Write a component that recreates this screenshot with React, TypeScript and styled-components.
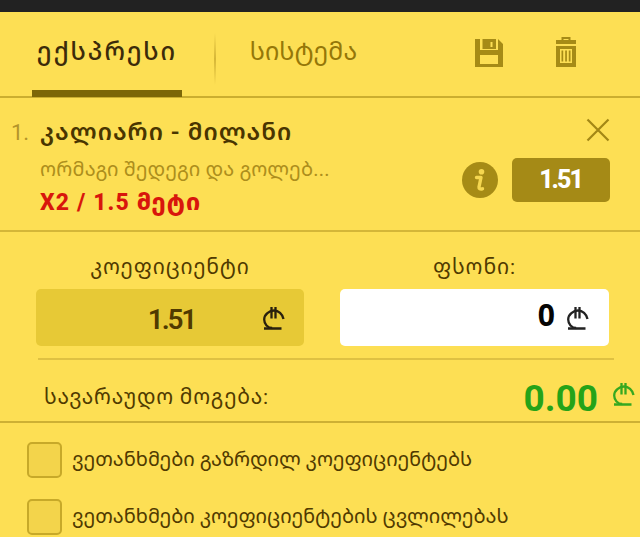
import styled, { createGlobalStyle } from "styled-components";

const GlobalStyle = createGlobalStyle`
  * {
    box-sizing: border-box;
  }

  body {
    margin: 0;
    background: #fddf54;
    overflow: hidden;
  }
`;

const agreements = [
  "ვეთანხმები გაზრდილ კოეფიციენტებს",
  "ვეთანხმები კოეფიციენტების ცვლილებას",
];

const Slip = styled.main`
  display: flex;
  flex-direction: column;
  width: 640px;
  height: 537px;
  overflow: hidden;
  border-top: 12px solid #222;
  background: #fddf54;
  color: #503a00;
  font-family: Roboto, "Noto Sans Georgian", "DejaVu Sans", sans-serif;
`;

const Header = styled.header`
  display: flex;
  height: 86px;
  padding-left: 32px;
  border-bottom: 2px solid #cbae2f;
`;

const Tab = styled.button<{ $active?: boolean; $width: number }>`
  width: ${(p) => p.$width}px;
  height: 85px;
  padding: 1px 0 0;
  border: 0;
  border-bottom: 7px solid ${(p) => (p.$active ? "#7d6707" : "transparent")};
  background: none;
  color: ${(p) => (p.$active ? "#3c2b0a" : "#957708")};
  font: ${(p) => (p.$active ? 500 : 400)} 25px/76px Roboto, "Noto Sans Georgian", "DejaVu Sans", sans-serif;
  letter-spacing: ${(p) => (p.$active ? 2 : 0)}px;
  white-space: nowrap;
`;

const TabDivider = styled.div`
  width: 2px;
  height: 52px;
  margin: 21px 33px 0 32px;
  background: linear-gradient(#fddf54, #d5b637 50%, #fddf54);
`;

const Tools = styled.div`
  display: flex;
  gap: 53px;
  margin: 25px 0 0 117px;
`;

const Match = styled.section`
  display: flex;
  height: 134px;
  padding-left: 11px;
  border-bottom: 2px solid #d4b638;
`;

const Index = styled.span`
  width: 29px;
  padding-top: 20px;
  color: #b3942a;
  font-size: 22px;
  line-height: 30px;
`;

const MatchInfo = styled.div`
  width: 422px;
  padding-top: 19px;
  white-space: nowrap;
`;

const Teams = styled.h2`
  margin: 0;
  color: #493500;
  font-size: 24px;
  font-weight: 600;
  line-height: 30px;
  letter-spacing: 1px;
`;

const Market = styled.p`
  margin: 7px 0 0;
  color: #ad8e1c;
  font-size: 20px;
  line-height: 30px;
  letter-spacing: 0.15px;
`;

const Pick = styled.p`
  margin: 4px 0 0;
  color: #d8160c;
  font-size: 23px;
  font-weight: 800;
  line-height: 30px;
  letter-spacing: 1.1px;
`;

const MatchSide = styled.div`
  display: flex;
  flex-direction: column;
  align-items: flex-end;
  width: 148px;
  padding-top: 20px;
`;

const OddsRow = styled.div`
  display: flex;
  align-items: center;
  justify-content: space-between;
  width: 100%;
  margin-top: 15px;
`;

const OddsBadge = styled.div`
  width: 98px;
  height: 44px;
  margin-top: 1px;
  padding-right: 1px;
  border-radius: 5px;
  background: #a58a16;
  color: #fff;
  font: 800 25px/44px Roboto, sans-serif;
  letter-spacing: -2px;
  text-align: center;
`;

const Fields = styled.section`
  display: flex;
  gap: 36px;
  height: 128px;
  margin: 0 26px 0 38px;
  border-bottom: 2px solid #dfc142;
`;

const Field = styled.label`
  width: 268px;
  margin-left: -2px;
  padding-top: 20px;
  font-size: 21px;
  line-height: 30px;
  text-align: center;
  white-space: nowrap;

  & + & {
    width: 269px;
    margin-left: 0;
  }
`;

const FieldTitle = styled.span`
  letter-spacing: 0.9px;
`;

const FieldBox = styled.div<{ $editable?: boolean }>`
  display: flex;
  align-items: center;
  justify-content: flex-end;
  height: 57px;
  margin-top: 7px;
  padding-right: ${(p) => (p.$editable ? 20 : 19)}px;
  border-radius: 5px;
  background: ${(p) => (p.$editable ? "#fff" : "#e7c936")};
`;

const Coefficient = styled.span`
  margin-right: 68px;
  padding-top: 4px;
  font: 600 28px/32px Roboto, sans-serif;
  letter-spacing: -2.2px;
`;

const Stake = styled.span`
  margin-right: 12px;
  padding-bottom: 5px;
  color: #050505;
  font: 700 30px/32px "Noto Sans", sans-serif;
`;

const Payout = styled.section`
  display: flex;
  align-items: center;
  height: 63px;
  padding: 7px 5px 0 44px;
  border-bottom: 2px solid #cdb034;
`;

const PayoutLabel = styled.span`
  flex: 1;
  padding-top: 3px;
  font-size: 21px;
  letter-spacing: 0.75px;
  white-space: nowrap;
`;

const Amount = styled.strong`
  margin-right: 15px;
  padding-top: 10px;
  color: #25a318;
  font: 700 37px/44px Roboto, sans-serif;
`;

const Agreements = styled.section`
  display: flex;
  flex-direction: column;
  gap: 21px;
  padding: 19px 0 0 27px;
`;

const Agreement = styled.label`
  display: flex;
  align-items: center;
  gap: 10px;
  height: 36px;
  font-size: 20px;
  line-height: 36px;
  letter-spacing: -0.05px;
  white-space: nowrap;
`;

const AgreementText = styled.span`
  padding-bottom: 2px;
`;

const Checkbox = styled.span`
  width: 35px;
  height: 36px;
  border: 2px solid #c7a929;
  border-radius: 5px;
  background: #f3d44b;
`;

const SaveIcon = () => (
  <svg width="28" height="30" viewBox="0 0 28 30" fill="#a68b16">
    <path
      fillRule="evenodd"
      d="M0 2h5v11h18V2l5 5v23H0zM5 18v9h18v-9z"
    />
    <path fillRule="evenodd" d="M7.500 2H21v10H7.500zM15.500 5v5h2V5z" />
    <path d="M5 15h18" stroke="#a68b16" />
  </svg>
);

const TrashIcon = () => (
  <svg width="20" height="30" viewBox="0 0 20 30" fill="#a68b16">
    <path d="M5.500 4V0h9v4h-2V2h-5v2zM0 3h20v4H0z" />
    <path fillRule="evenodd" d="M0 9h20v21H0zM4 12v14h12V12z" />
    <path d="M5.500 13.500h1.700v11H5.500zM9.200 13.500h1.700v11H9.200zM12.800 13.500h1.700v11h-1.700z" />
  </svg>
);

const CloseIcon = () => (
  <svg width="24" height="24" viewBox="0 0 24 24" stroke="#a38715" strokeWidth="2.200">
    <path d="M1.500 1.500l21 21M22.500 1.500l-21 21" />
  </svg>
);

const InfoIcon = () => (
  <svg width="36" height="36" viewBox="0 0 36 36">
    <circle cx="18" cy="18" r="18" fill="#a68b16" />
    <circle cx="19.500" cy="9.800" r="2.800" fill="#f4d650" />
    <path
      d="M14.500 15.500h4.500l-2 9.500q-.3 2.500 3.500 1.800"
      fill="none"
      stroke="#f4d650"
      strokeWidth="3.400"
      strokeLinejoin="round"
      strokeLinecap="round"
    />
  </svg>
);

const LariIcon = ({ color }: { color: string }) => (
  <svg width="22" height="24" viewBox="0 0 22 24" fill="none" stroke={color} strokeWidth="2.300">
    <path d="M20.500 13C19.500 8 15.500 4.500 11 4.500S1.200 8.500 1.200 13.500c0 4.500 3.500 8.500 8 8.500" />
    <path d="M1 22.500H18.500M8.500 1v11.500M12.500 1v11.500" />
  </svg>
);

export default function App() {
  return (
    <>
      <GlobalStyle />
      <Slip>
        <Header>
          <Tab $active $width={150}>ექსპრესი</Tab>
          <TabDivider />
          <Tab $width={109}>სისტემა</Tab>
          <Tools>
            <SaveIcon />
            <TrashIcon />
          </Tools>
        </Header>

        <Match>
          <Index>1.</Index>
          <MatchInfo>
            <Teams>კალიარი - მილანი</Teams>
            <Market>ორმაგი შედეგი და გოლებ...</Market>
            <Pick>X2 / 1.5 მეტი</Pick>
          </MatchInfo>
          <MatchSide>
            <CloseIcon />
            <OddsRow>
              <InfoIcon />
              <OddsBadge>1.51</OddsBadge>
            </OddsRow>
          </MatchSide>
        </Match>

        <Fields>
          <Field>
            <FieldTitle>კოეფიციენტი</FieldTitle>
            <FieldBox>
              <Coefficient>1.51</Coefficient>
              <LariIcon color="#29200e" />
            </FieldBox>
          </Field>
          <Field>
            <FieldTitle>ფსონი:</FieldTitle>
            <FieldBox $editable>
              <Stake>0</Stake>
              <LariIcon color="#222" />
            </FieldBox>
          </Field>
        </Fields>

        <Payout>
          <PayoutLabel>სავარაუდო მოგება:</PayoutLabel>
          <Amount>0.00</Amount>
          <LariIcon color="#36a820" />
        </Payout>

        <Agreements>
          {agreements.map((label) => (
            <Agreement key={label}>
              <Checkbox />
              <AgreementText>{label}</AgreementText>
            </Agreement>
          ))}
        </Agreements>
      </Slip>
    </>
  );
}
